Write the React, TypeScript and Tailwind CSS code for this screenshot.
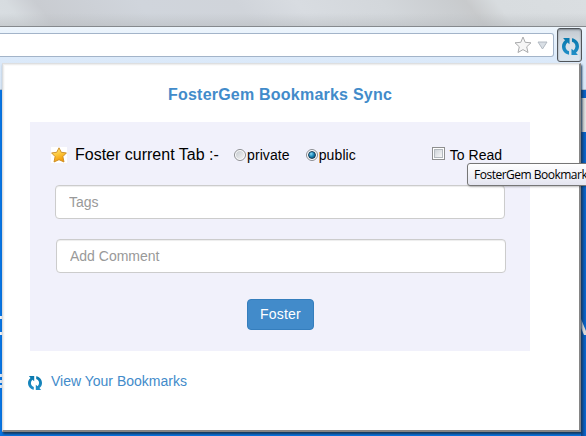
import React from 'react';

function SyncIcon({ className }: { className: string }) {
  return (
    <svg viewBox="0 0 14 14" className={className} aria-hidden="true">
      <defs>
        <linearGradient id="sync-blue" x1="0" y1="0" x2="0" y2="1">
          <stop offset="0" stopColor="#0878ad" />
          <stop offset="1" stopColor="#218fc8" />
        </linearGradient>
      </defs>
      <g fill="url(#sync-blue)">
        <path d="M0.9 0H6.2V5.2L4.4 3.8C2.5 5.7 2.4 8.4 4.1 10L5.8 10.9V13.7C2.5 13.2 0 10.6 0 7C0 4.9 1 3.1 2.5 1.9Z" />
        <path d="M13.1 14H7.8V8.8L9.6 10.2C11.5 8.3 11.6 5.6 9.9 4L8.2 3.1V0.3C11.5 0.8 14 3.4 14 7C14 9.1 13 10.9 11.5 12.1Z" />
      </g>
    </svg>
  );
}

function GoldStar() {
  return (
    <span className="block size-4 bg-white">
      <svg viewBox="0 0 16 16" className="size-4" aria-hidden="true">
        <defs>
          <linearGradient id="gold" x1="0" y1="0" x2="0.4" y2="1">
            <stop offset="0" stopColor="#fff0a0" />
            <stop offset="0.5" stopColor="#fdcb40" />
            <stop offset="1" stopColor="#f39a08" />
          </linearGradient>
        </defs>
        <path
          d="M8 0.8L10.3 5.3L15.4 5.9L11.9 9.6L13 15L8 12.7L3 15L4.1 9.6L0.6 5.9L5.7 5.3Z"
          fill="url(#gold)"
          stroke="#c98a24"
          strokeWidth="0.9"
          strokeLinejoin="round"
        />
      </svg>
    </span>
  );
}

function Radio({ label, checked }: { label: string; checked?: boolean }) {
  return (
    <label className="flex items-center text-[14px] leading-5 tracking-[0.1px] text-black">
      <span className="-mt-px mr-px flex size-3 items-center justify-center rounded-full border border-[#8b8d91] bg-white">
        <span
          className={
            checked
              ? 'size-[8px] rounded-full border border-[#173a56] bg-radial-[at_35%_30%] from-[#87d7f4] via-[#1683b5] to-[#123b5b]'
              : 'size-[8px] rounded-full bg-linear-to-br from-[#c6cbd0] to-[#f4f4f4]'
          }
        />
      </span>
      {label}
    </label>
  );
}

function BrowserChrome() {
  return (
    <header>
      <div className="h-[26px] bg-[linear-gradient(52deg,#d9dee2_0%,#d7dce0_4%,#c9ccd1_9%,#d0d5dc_26%,#d0d4da_42%,#d8dce1_52%,#d3d7db_66%,#cacdd0_77%,#c8cacc_80%,#d8dcdf_85%,#dadee1_100%)]">
        <div className="h-full bg-linear-to-b from-transparent from-50% to-[#b6babd]/50" />
      </div>
      <div className="flex h-[64px] items-start border-t border-b border-t-[#85898d] border-b-[#b1c0d0] bg-linear-to-b from-[#edf5fc] via-[#dceafa] to-[#d8e6f6]">
        <div className="mt-[6px] flex h-6 w-[554px] items-center justify-end rounded-r-[3px] border border-l-0 border-[#a3b4c9] bg-white pr-[5px]">
          <svg viewBox="0 0 18 18" className="mr-[5px] size-[18px]" aria-hidden="true">
            <path
              d="M9 1L11.2 6.3L17 6.8L12.7 10.8L14 16.5L9 13.6L4 16.5L5.3 10.8L1 6.8L6.8 6.3Z"
              fill="#f6f6f6"
              stroke="#aaabad"
              strokeLinejoin="round"
            />
          </svg>
          <svg viewBox="0 0 11 9" className="h-[9px] w-[11px]" aria-hidden="true">
            <path d="M1 1H10L5.5 8Z" fill="#d9dfe5" stroke="#adb4bd" strokeWidth="0.9" />
          </svg>
        </div>
        <div className="mt-px ml-[3px] flex h-[34px] w-[25px] items-center justify-center rounded-[3px] border border-[#50555a] bg-linear-to-b from-[#c2c8cf] via-[#d8e0e8] to-[#dbe5ef] pt-[3px] pl-px shadow-[inset_0_1px_2px_#7d858d]">
          <SyncIcon className="size-[17px]" />
        </div>
      </div>
    </header>
  );
}

function PageBehind() {
  return (
    <main className="flex h-[346px] justify-between bg-[#0874e2]">
      <div className="flex w-[3px] flex-col">
        <div className="mt-[226px] h-[3px] bg-[#eef2f8]" />
        <div className="mt-[13px] h-[3px] bg-[#eef2f8]" />
        <div className="mt-[39px] h-[3px] w-[2px] bg-[#dbe5f2]" />
        <div className="mt-[3px] h-[3px] w-[2px] bg-[#dbe5f2]" />
        <div className="mt-[2px] h-[3px] w-[2px] bg-[#dbe5f2]" />
      </div>
      <div className="w-[5px] bg-linear-to-r from-[#0b458c] to-[#0868d1]">
        <div className="h-[8px]" />
        <div className="h-[34px] bg-linear-to-r from-[#a5a5a5] to-[#e7e7e7]" />
        <svg viewBox="0 0 5 16" className="mt-[187px] h-4 w-[5px]" aria-hidden="true">
          <path d="M0 0L5 12V16H3L0 9Z" fill="#d9d9d9" />
        </svg>
      </div>
    </main>
  );
}

function Field({ placeholder, className }: { placeholder: string; className: string }) {
  return (
    <input
      placeholder={placeholder}
      className={`block h-[34px] w-[450px] rounded-[4px] border border-[#ccc] bg-white px-[13px] text-[14px] text-[#555] shadow-[inset_0_1px_1px_#00000013] outline-none placeholder:text-[#999] placeholder:opacity-100 ${className}`}
    />
  );
}

function SyncPopup() {
  return (
    <section className="absolute top-[63px] left-[2px] h-[369px] w-[579px] border-t border-r-2 border-b-2 border-l border-t-[#dedfe0] border-r-[#858585] border-b-[#858585] border-l-[#d9dcdf] bg-white shadow-[1px_2px_2px_#17395c]">
      <div className="h-full border-t border-l border-[#eeeeee] shadow-[inset_1px_1px_0_#fafafa]">
        <h1 className="ml-[26px] w-[500px] pt-[19px] text-center text-[16px] leading-[22px] font-bold tracking-[0.22px] text-[#428bca]">
          FosterGem Bookmarks Sync
        </h1>
        <form className="mt-[16px] ml-[26px] h-[229px] w-[500px] bg-[#f1f1fb] pt-[22px]">
          <div className="flex h-[22px] items-center pl-[21px]">
            <GoldStar />
            <span className="ml-2 w-[159px] text-[16px] leading-[22px] whitespace-nowrap text-black">
              Foster current Tab :-
            </span>
            <Radio label="private" />
            <span className="w-4" />
            <Radio label="public" checked />
            <label className="ml-auto flex items-center pr-[28px] text-[14px] leading-5 text-black">
              <span className="mr-[5px] -mt-[3px] block size-[13px] border border-[#8e8f8f] bg-white p-px">
                <span className="block size-full border border-[#b4b9be] bg-linear-to-br from-[#cfd4d9] to-[#f7f7f7]" />
              </span>
              To Read
            </label>
          </div>
          <Field placeholder="Tags" className="mt-[19px] ml-[25px]" />
          <Field placeholder="Add Comment" className="mt-[20px] ml-[26px]" />
          <button
            type="button"
            className="mt-[26px] ml-[217px] block h-[31px] w-[67px] rounded-[4px] border border-[#357ebd] bg-[#428bca] text-[14px] tracking-[0.2px] text-white"
          >
            Foster
          </button>
        </form>
        <a className="mt-[20px] ml-[24px] flex h-5 items-center text-[14px] leading-5 text-[#428bca]">
          <SyncIcon className="mt-[3px] mr-[9px] size-[14px]" />
          View Your Bookmarks
        </a>
      </div>
    </section>
  );
}

export default function App() {
  return (
    <div className="relative h-[436px] w-[586px] overflow-hidden font-['Liberation_Sans',Arial,sans-serif]">
      <BrowserChrome />
      <PageBehind />
      <SyncPopup />
      <div
        role="tooltip"
        className="absolute top-[163px] left-[467px] h-[23px] w-[140px] rounded-[3px] border border-[#767676] bg-linear-to-b from-white to-[#e4e5f0] pl-[6px] font-['Open_Sans','Noto_Sans',sans-serif] text-[12px] leading-[22px] tracking-[-0.5px] whitespace-nowrap text-black shadow-[1px_1px_2px_#00000040]"
      >
        FosterGem Bookmark
      </div>
    </div>
  );
}
